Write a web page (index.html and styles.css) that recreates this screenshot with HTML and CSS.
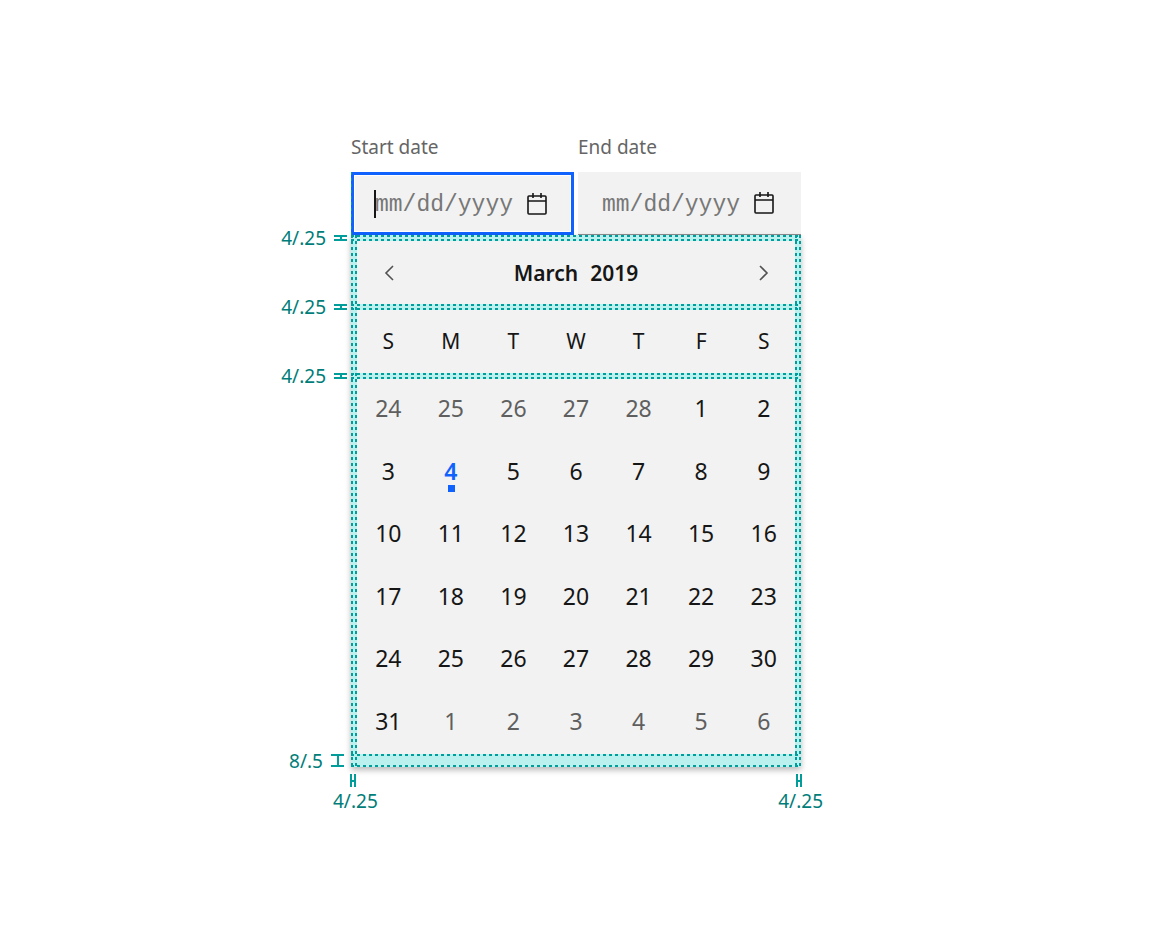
FILE: index.html
```html
<!DOCTYPE html>
<html lang="en">
<head>
<meta charset="utf-8">
<title>Date picker spacing</title>
<link rel="stylesheet" href="styles.css">
</head>
<body>
<main class="page">
  <section class="picker">
    <div class="fields">
      <div class="field">
        <label class="label" for="start">Start date</label>
        <div class="control focused">
          <span class="caret"></span>
          <input class="input" id="start" type="text" placeholder="mm/dd/yyyy">
          <svg class="calendar-icon" viewBox="0 0 20 22" aria-hidden="true"><rect x="1" y="3" width="18" height="18" rx="1"/><path d="M1 8h18M6 0v5M14 0v5"/></svg>
        </div>
      </div>
      <div class="field">
        <label class="label" for="end">End date</label>
        <div class="control">
          <input class="input" id="end" type="text" placeholder="mm/dd/yyyy">
          <svg class="calendar-icon" viewBox="0 0 20 22" aria-hidden="true"><rect x="1" y="3" width="18" height="18" rx="1"/><path d="M1 8h18M6 0v5M14 0v5"/></svg>
        </div>
      </div>
      <span class="field-guide"></span>
    </div>
    <div class="calendar">
      <div class="band"><span class="note">4/.25<i class="bracket"></i></span></div>
      <header class="month">
        <button class="arrow" aria-label="Previous month"><svg viewBox="0 0 10 16"><path d="M9 1L2 8l7 7"/></svg></button>
        <h1 class="title"><span>March</span><span>2019</span></h1>
        <button class="arrow" aria-label="Next month"><svg viewBox="0 0 10 16"><path d="M1 1l7 7-7 7"/></svg></button>
      </header>
      <div class="band"><span class="note">4/.25<i class="bracket"></i></span></div>
      <div class="weekdays"><span>S</span><span>M</span><span>T</span><span>W</span><span>T</span><span>F</span><span>S</span></div>
      <div class="band"><span class="note">4/.25<i class="bracket"></i></span></div>
      <div class="days">
        <button class="day other">24</button><button class="day other">25</button><button class="day other">26</button><button class="day other">27</button><button class="day other">28</button><button class="day">1</button><button class="day">2</button>
        <button class="day">3</button><button class="day today">4</button><button class="day">5</button><button class="day">6</button><button class="day">7</button><button class="day">8</button><button class="day">9</button>
        <button class="day">10</button><button class="day">11</button><button class="day">12</button><button class="day">13</button><button class="day">14</button><button class="day">15</button><button class="day">16</button>
        <button class="day">17</button><button class="day">18</button><button class="day">19</button><button class="day">20</button><button class="day">21</button><button class="day">22</button><button class="day">23</button>
        <button class="day">24</button><button class="day">25</button><button class="day">26</button><button class="day">27</button><button class="day">28</button><button class="day">29</button><button class="day">30</button>
        <button class="day">31</button><button class="day other">1</button><button class="day other">2</button><button class="day other">3</button><button class="day other">4</button><button class="day other">5</button><button class="day other">6</button>
      </div>
      <div class="band tall"><span class="note">8/.5<i class="bracket"></i></span></div>
      <div class="side left"></div>
      <div class="side right"></div>
    </div>
    <div class="footnotes">
      <span class="footnote"><i class="bracket across"></i>4/.25</span>
      <span class="footnote"><i class="bracket across"></i>4/.25</span>
    </div>
  </section>
</main>
</body>
</html>
```
FILE: styles.css
```css
* { box-sizing: border-box; }

body {
  margin: 0;
  background: #fff;
  color: #161616;
  font-family: "Noto Sans", "Open Sans", sans-serif;
}

button {
  padding: 0;
  border: 0;
  background: none;
  color: inherit;
  font: inherit;
}

.page {
  display: grid;
  grid-template-columns: 351fr 450fr 351fr;
  padding: 134px 0;
}

.picker { grid-column: 2; min-width: 0; }

.fields {
  position: relative;
  display: grid;
  grid-template-columns: 1fr 1fr;
  gap: 4px;
}

.field { min-width: 0; }

.label {
  display: block;
  padding-bottom: 12px;
  color: #656565;
  font-size: 19px;
  line-height: 26px;
}

.control {
  position: relative;
  display: flex;
  align-items: center;
  height: 63px;
  padding: 0 27px 0 24px;
  background: #f2f2f2;
  border-bottom: 1px solid #8d8d8d;
}

.control.focused {
  border: 0;
  box-shadow: inset 0 0 0 3px #0f62fe, inset 0 0 0 4px #fff;
}

.input {
  flex: 1;
  min-width: 0;
  padding: 3px 0 0;
  border: 0;
  outline: 0;
  background: none;
  color: #161616;
  font: 23px/30px "Liberation Mono", monospace;
}

.input::placeholder { color: #777; opacity: 1; }

.caret {
  position: absolute;
  left: 23px;
  width: 2px;
  height: 28px;
  background: #161616;
}

.calendar-icon {
  flex: none;
  width: 20px;
  height: 22px;
  fill: none;
  stroke: #161616;
  stroke-width: 1.6;
}

.field-guide {
  position: absolute;
  left: 0;
  bottom: 0;
  width: 1px;
  height: 63px;
  background: repeating-linear-gradient(180deg, #009d9a 0 3px, transparent 3px 6px);
}

.calendar {
  position: relative;
  background: #f2f2f2;
  box-shadow: 0 3px 6px rgba(0, 0, 0, .28);
}

.band {
  position: relative;
  height: 6px;
  background: #baf0ee;
}

.band::after {
  content: "";
  position: absolute;
  inset: 0;
  z-index: 1;
  background:
    repeating-linear-gradient(90deg, #009d9a 0 3px, transparent 3px 6px) 0 0 / 100% 2px no-repeat,
    repeating-linear-gradient(90deg, #009d9a 0 3px, transparent 3px 6px) 0 100% / 100% 2px no-repeat;
}

.band.tall { height: 13px; }

.side {
  position: absolute;
  top: 0;
  bottom: 0;
  width: 6px;
  background:
    repeating-linear-gradient(180deg, #009d9a 0 3px, transparent 3px 6px) 0 0 / 2px 100% no-repeat,
    repeating-linear-gradient(180deg, #009d9a 0 3px, transparent 3px 6px) 100% 0 / 2px 100% no-repeat,
    #baf0ee;
}

.left { left: 0; }
.right { right: 0; }

.note {
  position: absolute;
  right: 100%;
  top: 50%;
  display: flex;
  align-items: center;
  gap: 8px;
  padding-right: 4px;
  color: #007d79;
  font-size: 19px;
  line-height: 24px;
  transform: translateY(-50%);
}

.bracket {
  width: 13px;
  height: 6px;
  background: linear-gradient(#009d9a, #009d9a) 50% 0 / 2px 100% no-repeat;
  border: solid #009d9a;
  border-width: 2px 0;
}

.tall .bracket { height: 13px; }
.tall .note { padding-right: 7px; }

.month {
  display: flex;
  align-items: center;
  justify-content: space-between;
  height: 63px;
  padding: 0 6px;
}

.arrow {
  display: grid;
  place-items: center;
  width: 63px;
  height: 63px;
}

.arrow svg {
  width: 10px;
  height: 16px;
  fill: none;
  stroke: #525252;
  stroke-width: 1.6;
}

.title {
  display: flex;
  gap: 12px;
  margin: 0;
  font-size: 21px;
  font-weight: 600;
  line-height: 30px;
}

.weekdays, .days {
  display: grid;
  grid-template-columns: repeat(7, 1fr);
  padding: 0 6px;
  text-align: center;
}

.weekdays {
  height: 63px;
  align-items: center;
  padding-bottom: 2px;
  font-size: 21px;
  line-height: 30px;
}

.days {
  grid-template-rows: repeat(6, 1fr);
  height: 375px;
  font-size: 23px;
}

.day { position: relative; padding-bottom: 4px; }
.other { color: #5f5f5f; }
.today { color: #0f62fe; font-weight: 600; }

.today::after {
  content: "";
  position: absolute;
  left: 50%;
  bottom: 12px;
  width: 7px;
  height: 7px;
  margin-left: -3px;
  background: #0f62fe;
}

.footnotes {
  display: flex;
  justify-content: space-between;
  margin: 7px -22px 0 -18px;
  color: #007d79;
  font-size: 19px;
  line-height: 28px;
}

.footnote {
  display: flex;
  flex-direction: column;
  align-items: center;
}

.bracket.across {
  width: 6px;
  height: 13px;
  margin-right: 4px;
  background: linear-gradient(#009d9a, #009d9a) 0 50% / 100% 2px no-repeat;
  border-width: 0 2px;
}
```
